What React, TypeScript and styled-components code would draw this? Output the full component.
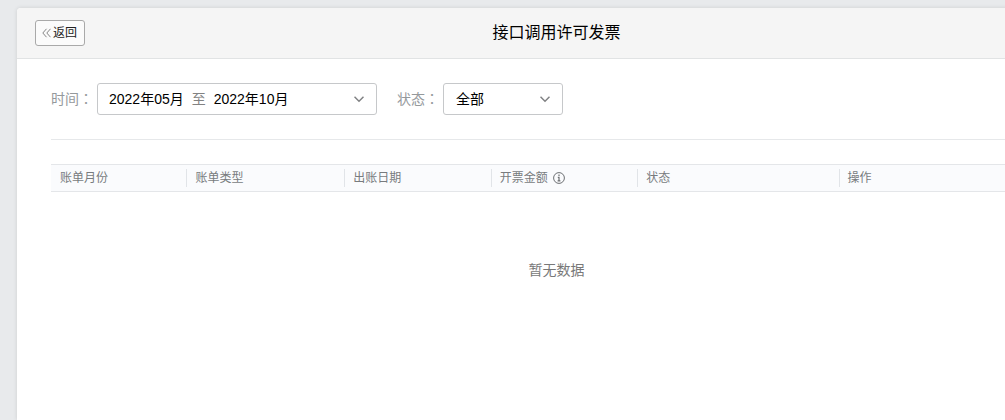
import React from "react";
import styled, { createGlobalStyle } from "styled-components";

const GlobalStyle = createGlobalStyle`
  *, *::before, *::after { box-sizing: border-box; }
  body {
    margin: 0;
    background: #e8eaec;
    color: #000;
    font-family: "Liberation Sans", "Noto Sans CJK SC", sans-serif;
    font-size: 14px;
    line-height: 20px;
  }
  button, select { font: inherit; color: inherit; }
`;

const Page = styled.div`
  display: flex;
  min-height: 100vh;
  padding: 8px 0 0 17px;
  overflow: hidden;
`;

/* The panel is wider than the viewport and runs off its right edge. */
const Panel = styled.main`
  flex: 1 0 auto;
  width: calc(100% + 91px);
  background: #fff;
  border-radius: 4px 4px 0 0;
  box-shadow: 0 0 4px rgba(0, 0, 0, 0.12);
`;

const Header = styled.header`
  display: grid;
  grid-template-columns: 1fr auto 1fr;
  align-items: center;
  height: 51px;
  padding: 0 18px;
  background: #f5f5f5;
  border-bottom: 1px solid #e1e3e4;
  border-radius: 4px 4px 0 0;
`;

const BackButton = styled.button`
  display: flex;
  align-items: center;
  justify-self: start;
  gap: 2px;
  height: 26px;
  padding: 0 7px 0 6px;
  border: 1px solid #a9a9a9;
  border-radius: 3px;
  background: #fbfbfb;
  color: #222;
  font-size: 12px;
  line-height: 16px;
`;

const Title = styled.h1`
  margin: 0;
  font-size: 16px;
  font-weight: 400;
  line-height: 24px;
`;

const Content = styled.div`
  padding: 24px 34px;
`;

const Filters = styled.form`
  display: flex;
  gap: 20px;
  padding-bottom: 24px;
  border-bottom: 1px solid #e6e8ea;
`;

const Field = styled.div`
  display: flex;
  align-items: center;
  gap: 4px;
`;

const Label = styled.label`
  color: #95999c;
`;

const Colon = styled.span`
  font-family: "Noto Sans CJK TC", sans-serif;
  line-height: 1;
`;

const DateRange = styled.button`
  display: flex;
  align-items: center;
  gap: 8px;
  width: 280px;
  height: 32px;
  padding: 0 12px 0 11px;
  border: 1px solid #c6c8ca;
  border-radius: 3px;
  background: #fff;

  svg { margin-left: auto; }
`;

const Separator = styled.span`
  color: #828282;
`;

const SelectBox = styled.div`
  position: relative;
  width: 120px;

  svg {
    position: absolute;
    top: 11px;
    right: 13px;
    pointer-events: none;
  }
`;

const Select = styled.select`
  display: block;
  width: 100%;
  height: 32px;
  padding: 0 32px 0 12px;
  appearance: none;
  border: 1px solid #c6c8ca;
  border-radius: 3px;
  background: #fff;
`;

const Table = styled.table`
  width: 100%;
  margin-top: 24px;
  border-collapse: collapse;
  table-layout: fixed;
`;

const HeadRow = styled.tr`
  background: #fafbfd;
  border-top: 1px solid #e4e6e9;
  border-bottom: 1px solid #e4e6e9;
`;

const HeadCell = styled.th<{ $width: string }>`
  width: ${(p) => p.$width};
  padding: 4px 0;
  color: #787b7e;
  font-size: 12px;
  font-weight: 400;
  line-height: 18px;
  text-align: left;
`;

const HeadLabel = styled.div<{ $divided: boolean }>`
  display: flex;
  align-items: center;
  gap: 5px;
  padding-left: 8px;
  border-left: 1px solid ${(p) => (p.$divided ? "#e1e4e8" : "transparent")};
`;

const EmptyCell = styled.td`
  padding: 68px 0;
  color: #787878;
  text-align: center;
`;

const BackIcon = () => (
  <svg width="9" height="10" viewBox="0 0 9 10" fill="none" stroke="#777" strokeWidth="0.9" aria-hidden="true">
    <path d="M4.5 0.8L0.8 5l3.7 4.2M8.5 0.8L4.8 5l3.7 4.2" />
  </svg>
);

const Chevron = () => (
  <svg width="10" height="10" viewBox="0 0 10 10" fill="none" stroke="#808284" strokeWidth="1.5" aria-hidden="true">
    <path d="M0.5 2.8L5 7.3l4.5-4.5" />
  </svg>
);

const InfoIcon = () => (
  <svg width="12" height="12" viewBox="0 0 12 12" fill="none" stroke="#6c6f72" aria-hidden="true">
    <circle cx="6" cy="6" r="5.4" strokeWidth="1" />
    <path d="M6 2.6v1.4M4.8 5.3H6v3.5M4.6 8.8h2.8" strokeWidth="1.2" />
  </svg>
);

const columns = [
  { name: "账单月份", width: "13.4%" },
  { name: "账单类型", width: "15.6%" },
  { name: "出账日期", width: "14.5%" },
  { name: "开票金额", width: "14.5%", info: true },
  { name: "状态", width: "19.9%" },
  { name: "操作", width: "22.1%" },
];

export default function App() {
  return (
    <>
      <GlobalStyle />
      <Page lang="zh-CN">
        <Panel>
          <Header>
            <BackButton type="button">
              <BackIcon />
              返回
            </BackButton>
            <Title>接口调用许可发票</Title>
          </Header>
          <Content>
            <Filters>
              <Field>
                <Label htmlFor="period">时间<Colon lang="zh-TW">：</Colon></Label>
                <DateRange id="period" type="button" aria-haspopup="dialog">
                  <span>2022年05月</span>
                  <Separator>至</Separator>
                  <span>2022年10月</span>
                  <Chevron />
                </DateRange>
              </Field>
              <Field>
                <Label htmlFor="status">状态<Colon lang="zh-TW">：</Colon></Label>
                <SelectBox>
                  <Select id="status" defaultValue="all">
                    <option value="all">全部</option>
                  </Select>
                  <Chevron />
                </SelectBox>
              </Field>
            </Filters>
            <Table>
              <thead>
                <HeadRow>
                  {columns.map((column, index) => (
                    <HeadCell key={column.name} $width={column.width} scope="col">
                      <HeadLabel $divided={index > 0}>
                        {column.name}
                        {column.info && <InfoIcon />}
                      </HeadLabel>
                    </HeadCell>
                  ))}
                </HeadRow>
              </thead>
              <tbody>
                <tr>
                  <EmptyCell colSpan={columns.length}>暂无数据</EmptyCell>
                </tr>
              </tbody>
            </Table>
          </Content>
        </Panel>
      </Page>
    </>
  );
}
